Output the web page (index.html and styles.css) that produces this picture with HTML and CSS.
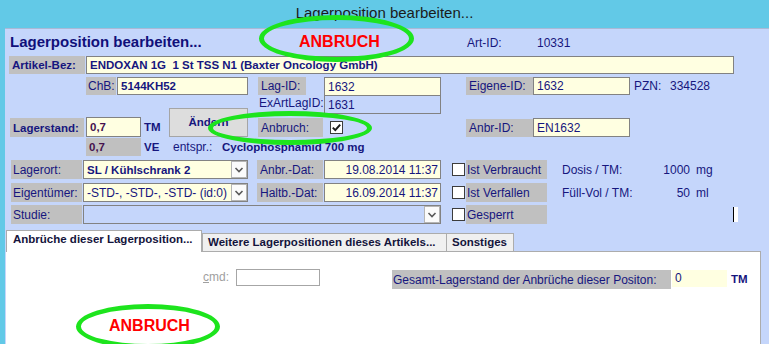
FILE: index.html
```html
<!DOCTYPE html>
<html lang="de">
<head>
	<meta charset="UTF-8">
	<meta name="viewport" content="width=device-width, initial-scale=1.0">
	<title>Lagerposition bearbeiten...</title>
	<link rel="stylesheet" href="styles.css">
</head>
<body>
<div class="titlebar">Lagerposition bearbeiten...</div>
<div class="window">
	<div class="head-row">
		<h1>Lagerposition bearbeiten...</h1>
		<span class="stamp stamp-top">ANBRUCH</span>
		<span class="art-id-label">Art-ID:</span>
		<span>10331</span>
	</div>

	<div class="field-row artikel-row">
		<span class="lbl bold artikel-lbl">Artikel-Bez:</span>
		<span class="inp bold artikel-inp">ENDOXAN 1G&nbsp; 1 St TSS N1 (Baxter Oncology GmbH)</span>
	</div>

	<div class="block">
		<!-- Charge, Lagerstand, Umrechnung -->
		<div class="col-left">
			<div class="field-row chb-row">
				<span class="lbl chb-lbl">ChB:</span>
				<span class="inp bold chb-inp">5144KH52</span>
			</div>
			<div class="stand-row">
				<span class="lbl bold stand-lbl">Lagerstand:</span>
				<span class="inp bold amount stand-inp">0,7</span>
				<span class="bold unit">TM</span>
				<button type="button" class="btn-aendern">Ändern</button>
			</div>
			<div class="ve-row">
				<span class="lbl bold amount ve-val">0,7</span>
				<span class="bold unit">VE</span>
				<span class="entspr">entspr.:</span>
				<span class="bold">Cyclophosphamid 700 mg</span>
			</div>
		</div>

		<!-- Lager-IDs -->
		<div class="col-mid">
			<div class="field-row lag-row">
				<span class="lbl lag-lbl">Lag-ID:</span>
				<span class="inp lag-inp">1632</span>
			</div>
			<div class="field-row exart-row">
				<span class="exart-lbl">ExArtLagID:</span>
				<span class="inp readonly exart-inp">1631</span>
			</div>
			<div class="field-row anbruch-row">
				<span class="lbl anbruch-lbl">Anbruch:</span>
				<span class="check"><svg width="11" height="11" viewBox="0 0 11 11"><path d="M1.8 5.6 L4.3 8.1 L9.2 2.6" fill="none" stroke="#1a1a1a" stroke-width="2"/></svg></span>
			</div>
		</div>

		<!-- Eigene IDs -->
		<div class="col-right">
			<div class="field-row eigene-row">
				<span class="lbl id-lbl">Eigene-ID:</span>
				<span class="inp id-inp">1632</span>
				<span class="pzn-lbl">PZN:</span>
				<span>334528</span>
			</div>
			<div class="field-row anbr-row">
				<span class="lbl id-lbl">Anbr-ID:</span>
				<span class="inp id-inp">EN1632</span>
			</div>
		</div>
	</div>

	<div class="field-row lower-row lagerort-row">
		<span class="lbl lower-lbl">Lagerort:</span>
		<span class="inp bold combo"><span class="combo-text">SL / Kühlschrank 2</span><span class="drop"><svg width="14" height="15" viewBox="0 0 14 15"><path d="M3.5 6 L7 9.5 L10.5 6" fill="none" stroke="#5a5a5a" stroke-width="1.6"/></svg></span></span>
		<span class="lbl date-lbl">Anbr.-Dat:</span>
		<span class="inp date-inp">19.08.2014 11:37</span>
		<span class="check"></span>
		<span class="lbl flag-lbl">Ist Verbraucht</span>
		<span class="info-lbl">Dosis / TM:</span>
		<span class="info-val">1000</span>
		<span class="info-unit">mg</span>
	</div>
	<div class="field-row lower-row eigentuemer-row">
		<span class="lbl lower-lbl">Eigentümer:</span>
		<span class="inp combo"><span class="combo-text">-STD-, -STD-, -STD- (id:0)</span><span class="drop"><svg width="14" height="15" viewBox="0 0 14 15"><path d="M3.5 6 L7 9.5 L10.5 6" fill="none" stroke="#5a5a5a" stroke-width="1.6"/></svg></span></span>
		<span class="lbl date-lbl">Haltb.-Dat:</span>
		<span class="inp date-inp">16.09.2014 11:37</span>
		<span class="check"></span>
		<span class="lbl flag-lbl">Ist Verfallen</span>
		<span class="info-lbl">Füll-Vol / TM:</span>
		<span class="info-val">50</span>
		<span class="info-unit">ml</span>
	</div>
	<div class="field-row lower-row studie-row">
		<span class="lbl lower-lbl">Studie:</span>
		<span class="inp combo combo-wide"><span class="combo-text"></span><span class="drop"><svg width="14" height="15" viewBox="0 0 14 15"><path d="M3.5 6 L7 9.5 L10.5 6" fill="none" stroke="#5a5a5a" stroke-width="1.6"/></svg></span></span>
		<span class="check"></span>
		<span class="lbl flag-lbl">Gesperrt</span>
		<span class="caret"></span>
	</div>

	<div class="tabs">
		<span class="tab active">Anbrüche dieser Lagerposition...</span>
		<span class="tab weitere">Weitere Lagerpositionen dieses Artikels...</span>
		<span class="tab sonstiges">Sonstiges</span>
	</div>
	<div class="tab-panel">
		<div class="cmd-row">
			<span class="cmd-lbl"><u>c</u>md:</span>
			<span class="cmd-inp"></span>
			<span class="lbl gesamt-lbl">Gesamt-Lagerstand der Anbrüche dieser Positon:</span>
			<span class="gesamt-inp">0</span>
			<span class="bold unit">TM</span>
		</div>
		<div class="stamp stamp-bottom">ANBRUCH</div>
	</div>
</div>

<!-- Markierungen -->
<div class="ring ring-top"></div>
<div class="ring ring-mid"></div>
<div class="ring ring-bottom"></div>
</body>
</html>
```

FILE: styles.css
```css
* {
	box-sizing: border-box;
}
html, body {
	margin: 0;
}
body {
	width: 769px;
	height: 344px;
	overflow: hidden;
	position: relative;
	background-color: #62c9e7;
	font-family: "Liberation Sans", Arial, sans-serif;
	font-size: 12px;
	color: #16167e;
}
.titlebar {
	height: 28px;
	line-height: 26px;
	text-align: center;
	font-size: 15px;
	color: #1b1b1b;
}
.window {
	margin-left: 5px;
	height: 316px;
	background-color: #c5d6fb;
	border-top: 1px solid #a9b9d6;
}
.window span,
.window button {
	flex-shrink: 0;
	white-space: nowrap;
}

/* Kopfzeile */
.head-row {
	display: flex;
	align-items: baseline;
	height: 27px;
	padding: 4px 0 0 5px;
}
.head-row h1 {
	margin: 0;
	width: 289px;
	font-size: 15px;
	line-height: 18px;
	color: #10107a;
}
.stamp {
	font-size: 16px;
	line-height: 18px;
	font-weight: bold;
	color: #ff0000;
}
.stamp-top {
	width: 168px;
}
.art-id-label {
	width: 70px;
}

/* Allgemeine Felder */
.field-row {
	display: flex;
	align-items: center;
}
.lbl {
	display: flex;
	align-items: center;
	background-color: #c0c0c0;
	padding-left: 3px;
	overflow: hidden;
}
.inp {
	display: flex;
	align-items: center;
	background-color: #ffffe1;
	border: 1px solid #828282;
	padding-left: 3px;
	overflow: hidden;
}
.readonly {
	background-color: transparent;
}
.bold {
	font-weight: bold;
	font-size: 11.5px;
}
.amount {
	color: #45124e;
}
.unit {
	margin-left: 3px;
	width: 25px;
}

.artikel-row {
	height: 18px;
}
.artikel-lbl {
	margin-left: 4px;
	width: 76px;
	height: 18px;
}
.artikel-inp {
	margin-left: 1px;
	width: 648px;
	height: 18px;
}

/* Block mit drei Spalten */
.block {
	display: flex;
	align-items: flex-start;
	margin-top: 3px;
}
.col-left {
	width: 243px;
}
.chb-row {
	height: 18px;
}
.chb-lbl {
	margin-left: 81px;
	width: 30px;
	height: 18px;
	padding-left: 2px;
}
.chb-inp {
	margin-left: 1px;
	width: 131px;
	height: 18px;
}
.stand-row {
	display: flex;
	align-items: flex-end;
	height: 29px;
	margin-top: 13px;
}
.stand-lbl {
	margin-left: 5px;
	width: 74px;
	height: 19px;
}
.stand-inp {
	margin-left: 2px;
	width: 55px;
	height: 20px;
}
.stand-row .unit {
	line-height: 20px;
}
.btn-aendern {
	width: 79px;
	height: 29px;
	padding: 0 0 1px 0;
	background-color: #dddddd;
	border: 1px solid #a5a5a5;
	font-family: "Liberation Sans", Arial, sans-serif;
	font-weight: bold;
	font-size: 11.5px;
	color: #16167e;
}
.ve-row {
	display: flex;
	align-items: center;
	height: 18px;
	margin-top: 1px;
}
.ve-val {
	margin-left: 81px;
	width: 55px;
	height: 18px;
}
.entspr {
	margin-left: 4px;
	width: 49px;
}

.col-mid {
	margin-left: 10px;
	width: 183px;
}
.lag-row {
	height: 19px;
	align-items: flex-start;
}
.lag-lbl {
	width: 48px;
	height: 18px;
}
.lag-inp {
	margin-left: 18px;
	width: 117px;
	height: 19px;
}
.exart-row {
	height: 19px;
	margin-top: -1px;
}
.exart-lbl {
	width: 66px;
	padding-left: 1px;
	line-height: 16px;
	align-self: flex-start;
}
.exart-inp {
	width: 117px;
	height: 19px;
}
.anbruch-row {
	height: 19px;
	margin-top: 4px;
}
.anbruch-lbl {
	width: 65px;
	height: 19px;
}
.anbruch-row .check {
	margin-left: 7px;
}

.col-right {
	margin-left: 25px;
}
.eigene-row {
	height: 19px;
	align-items: flex-start;
}
.id-lbl {
	width: 67px;
	height: 18px;
}
.id-inp {
	width: 97px;
	height: 19px;
}
.eigene-row .id-inp {
	height: 18px;
}
.pzn-lbl {
	margin-left: 4px;
	width: 36px;
	line-height: 18px;
}
.eigene-row span:last-child {
	line-height: 18px;
}
.anbr-row {
	height: 19px;
	margin-top: 22px;
}

/* Untere Zeilen */
.lower-row {
	height: 19px;
}
.lagerort-row {
	margin-top: 4px;
}
.eigentuemer-row {
	margin-top: 4px;
}
.studie-row {
	margin-top: 3px;
}
.lower-lbl {
	margin-left: 6px;
	width: 71px;
	height: 19px;
	padding-left: 2px;
}
.combo {
	margin-left: 1px;
	width: 165px;
	height: 19px;
	padding-right: 0;
}
.combo-wide {
	width: 358px;
	background-color: transparent;
}
.combo-text {
	flex: 1;
	overflow: hidden;
}
.drop {
	display: flex;
	align-items: center;
	justify-content: center;
	width: 16px;
	height: 17px;
	background-color: #fbfbfb;
	border: 1px solid #b5b5b5;
}
.date-lbl {
	margin-left: 9px;
	width: 66px;
	height: 19px;
}
.date-inp {
	margin-left: 1px;
	width: 117px;
	height: 19px;
	justify-content: flex-end;
	padding-right: 2px;
}
.check {
	display: flex;
	align-items: center;
	justify-content: center;
	margin-left: 11px;
	width: 13px;
	height: 13px;
	background-color: #ffffff;
	border: 1px solid #3c3c3c;
}
.flag-lbl {
	margin-left: 1px;
	width: 81px;
	height: 19px;
	padding-left: 1px;
}
.info-lbl {
	margin-left: 15px;
	width: 100px;
}
.info-val {
	width: 28px;
	text-align: right;
}
.info-unit {
	margin-left: 6px;
}
.caret {
	margin-left: 186px;
	width: 5px;
	height: 15px;
	background-color: #ffffff;
	border-left: 1px solid #000000;
}

/* Reiter */
.tabs {
	display: flex;
	align-items: flex-end;
	height: 21px;
	margin: 6px 0 0 1px;
}
.tab {
	height: 18px;
	padding: 1px 0 0 5px;
	line-height: 14px;
	font-weight: bold;
	font-size: 11.5px;
	color: #14143c;
	background-color: #f0f0f0;
	border: 1px solid #acacac;
	border-bottom: none;
}
.tab.active {
	position: relative;
	z-index: 1;
	width: 196px;
	height: 22px;
	margin-bottom: -1px;
	padding-left: 6px;
	background-color: #ffffff;
}
.tab.weitere {
	width: 245px;
}
.tab.sonstiges {
	width: 68px;
	margin-left: -1px;
}
.tab-panel {
	margin-left: 1px;
	width: 755px;
	height: 93px;
	padding-top: 17px;
	background-color: #ffffff;
	border-top: 1px solid #acacac;
	border-right: 1px solid #acacac;
}
.cmd-row {
	display: flex;
	align-items: flex-start;
	height: 20px;
}
.cmd-lbl {
	margin-left: 197px;
	width: 33px;
	line-height: 17px;
	color: #a0a0a0;
}
.cmd-inp {
	width: 84px;
	height: 17px;
	background-color: #ffffff;
	border: 1px solid #a6a6a6;
}
.gesamt-lbl {
	margin: 1px 0 0 72px;
	width: 279px;
	height: 19px;
	padding-left: 1px;
}
.gesamt-inp {
	margin: 1px 0 0 1px;
	width: 55px;
	height: 17px;
	padding-left: 3px;
	line-height: 17px;
	background-color: #ffffe1;
}
.cmd-row .unit {
	margin: 1px 0 0 4px;
	line-height: 19px;
}
.stamp-bottom {
	margin: 28px 0 0 103px;
}

/* Gruene Ellipsen ueber dem Formular */
.ring {
	position: absolute;
	border: 5px solid #1de41d;
	border-radius: 50%;
}
.ring-top {
	left: 259px;
	top: 15px;
	width: 155px;
	height: 47px;
}
.ring-mid {
	left: 208px;
	top: 111px;
	width: 164px;
	height: 34px;
}
.ring-bottom {
	left: 76px;
	top: 304px;
	width: 144px;
	height: 45px;
}
```
